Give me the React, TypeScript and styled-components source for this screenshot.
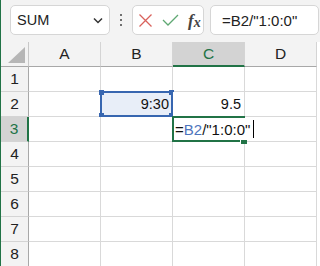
import styled, { createGlobalStyle } from "styled-components";

const Global = createGlobalStyle`
  html, body {
    margin: 0;
    padding: 0;
    background: #ffffff;
    font-family: "Liberation Sans", Arial, sans-serif;
  }
`;

const COLS = ["A", "B", "C", "D"];
const ROWS = [1, 2, 3, 4, 5, 6, 7, 8];

export default function App() {
  return (
    <>
      <Global />
      <Frame>
        <Toolbar>
          <NameBox>
            <span>SUM</span>
            <svg width="10" height="7" viewBox="0 0 10 7">
              <path d="M1 1.5 L5 5.5 L9 1.5" fill="none" stroke="#333" strokeWidth="1.5" />
            </svg>
          </NameBox>
          <Dots>
            <i />
            <i />
            <i />
          </Dots>
          <IconBox>
            <svg width="15" height="15" viewBox="0 0 15 15">
              <path d="M1.5 1.5 L13.5 13.5 M13.5 1.5 L1.5 13.5" stroke="#d9625c" strokeWidth="1.3" />
            </svg>
            <svg width="17" height="14" viewBox="0 0 17 14">
              <path d="M1 7 L6 12 L16 2" fill="none" stroke="#5fa873" strokeWidth="1.3" />
            </svg>
            <Fx>
              f<sub>x</sub>
            </Fx>
          </IconBox>
          <FormulaBox>=B2/"1:0:0"</FormulaBox>
        </Toolbar>

        <Sheet>
          <Corner>
            <svg width="17" height="16" viewBox="0 0 17 16">
              <path d="M17 0 L17 16 L0 16 Z" fill="#b6b6b6" />
            </svg>
          </Corner>
          {COLS.map((c) => (
            <ColHead key={c} $active={c === "C"}>
              {c}
            </ColHead>
          ))}
          {ROWS.map((r) => (
            <Row key={r} r={r} />
          ))}
        </Sheet>
      </Frame>
    </>
  );
}

function Row({ r }: { r: number }) {
  return (
    <>
      <RowHead $active={r === 3}>{r}</RowHead>
      {COLS.map((c) => {
        const id = `${c}${r}`;
        if (id === "B2")
          return (
            <Cell key={id} $ref>
              9:30
              <RefBox>
                <Handle style={{ left: -3, top: -3 }} />
                <Handle style={{ right: -3, top: -3 }} />
                <Handle style={{ left: -3, bottom: -3 }} />
                <Handle style={{ right: -3, bottom: -3 }} />
              </RefBox>
            </Cell>
          );
        if (id === "C2") return <Cell key={id}>9.5</Cell>;
        if (id === "C3")
          return (
            <Cell key={id}>
              <ActiveBox>
                <FillHandle />
              </ActiveBox>
              <Editor>
                =<RefText>B2</RefText>/"1:0:0"
                <Caret />
              </Editor>
            </Cell>
          );
        return <Cell key={id} />;
      })}
    </>
  );
}

const Frame = styled.div`
  width: 320px;
  height: 266px;
  overflow: hidden;
  border-left: 1px solid #217346;
  box-sizing: border-box;
  background: #f3f3f3;
`;

const Toolbar = styled.div`
  height: 42px;
  display: flex;
  align-items: flex-start;
  padding: 5px 0 0 9px;
  box-sizing: border-box;
  background: #f3f3f3;
`;

const NameBox = styled.div`
  width: 100px;
  height: 30px;
  box-sizing: border-box;
  background: #fff;
  border: 1px solid #d6d6d6;
  border-radius: 5px;
  display: flex;
  align-items: center;
  justify-content: space-between;
  padding: 0 6px 0 6px;
  font-size: 14.5px;
  color: #222;
`;

const Dots = styled.div`
  width: 22px;
  height: 30px;
  display: flex;
  flex-direction: column;
  align-items: center;
  justify-content: center;
  gap: 2.5px;

  i {
    width: 2.5px;
    height: 2.5px;
    background: #444;
    border-radius: 50%;
  }
`;

const IconBox = styled.div`
  width: 72px;
  height: 30px;
  box-sizing: border-box;
  background: #fff;
  border: 1px solid #d6d6d6;
  border-radius: 5px;
  display: flex;
  align-items: center;
  gap: 9px;
  padding-left: 5px;
`;

const Fx = styled.span`
  font-family: "Liberation Serif", "Times New Roman", serif;
  font-style: italic;
  font-weight: bold;
  font-size: 17px;
  color: #444;
  line-height: 1;

  sub {
    font-size: 14px;
    vertical-align: baseline;
    position: relative;
    top: 1px;
  }
`;

const FormulaBox = styled.div`
  margin-left: 6px;
  flex: 1;
  height: 30px;
  box-sizing: border-box;
  background: #fff;
  border: 1px solid #d6d6d6;
  border-radius: 5px;
  margin-right: 1px;
  display: flex;
  align-items: center;
  padding-left: 11px;
  font-size: 15px;
  color: #222;
`;

const Sheet = styled.div`
  display: grid;
  grid-template-columns: 28px repeat(4, 72px);
  grid-auto-rows: 25px;
  background: #fff;
`;

const Corner = styled.div`
  background: #f3f3f3;
  border-right: 1px solid #c8c8c8;
  border-bottom: 1px solid #a8a8a8;
  display: flex;
  align-items: flex-end;
  justify-content: flex-end;
  padding: 0 3px 3px 0;
  box-sizing: border-box;
`;

const ColHead = styled.div<{ $active?: boolean }>`
  background: ${(p) => (p.$active ? "#d3d3d3" : "#f3f3f3")};
  color: ${(p) => (p.$active ? "#217346" : "#222")};
  border-right: 1px solid #d4d4d4;
  border-bottom: ${(p) => (p.$active ? "2px solid #217346" : "1px solid #a8a8a8")};
  box-sizing: border-box;
  display: flex;
  align-items: center;
  justify-content: center;
  font-size: 15.5px;
`;

const RowHead = styled.div<{ $active?: boolean }>`
  background: ${(p) => (p.$active ? "#d3d3d3" : "#f3f3f3")};
  color: ${(p) => (p.$active ? "#217346" : "#222")};
  border-right: ${(p) => (p.$active ? "2px solid #217346" : "1px solid #a8a8a8")};
  border-bottom: 1px solid #d4d4d4;
  box-sizing: border-box;
  display: flex;
  align-items: center;
  justify-content: center;
  font-size: 15.5px;
`;

const Cell = styled.div<{ $ref?: boolean }>`
  position: relative;
  background: ${(p) => (p.$ref ? "#e8eef8" : "#fff")};
  border-right: 1px solid #d9d9d9;
  border-bottom: 1px solid #d9d9d9;
  box-sizing: border-box;
  display: flex;
  align-items: center;
  justify-content: flex-end;
  padding-right: 3px;
  font-size: 14.5px;
  color: #111;
`;

const RefBox = styled.div`
  position: absolute;
  left: -1px;
  top: -1px;
  right: -1px;
  bottom: -1px;
  border: 2px solid #3766b0;
`;

const Handle = styled.span`
  position: absolute;
  width: 5px;
  height: 5px;
  background: #3766b0;
`;

const Editor = styled.div`
  position: absolute;
  left: 1px;
  top: 1px;
  bottom: 1px;
  padding: 0 2px 0 1px;
  background: #fff;
  display: flex;
  align-items: center;
  white-space: nowrap;
  font-size: 15px;
  color: #111;
  z-index: 2;
`;

const RefText = styled.span`
  color: #4d74bd;
`;

const Caret = styled.span`
  width: 1px;
  height: 18px;
  background: #000;
  margin-left: 3px;
`;

const ActiveBox = styled.div`
  position: absolute;
  left: -1px;
  top: -1px;
  right: -1px;
  bottom: -1px;
  border: 2px solid #217346;
  z-index: 1;
`;

const FillHandle = styled.span`
  position: absolute;
  right: -4px;
  bottom: -4px;
  width: 6px;
  height: 5px;
  background: #217346;
  border: 1px solid #fff;
  border-right: none;
  border-bottom: none;
`;
